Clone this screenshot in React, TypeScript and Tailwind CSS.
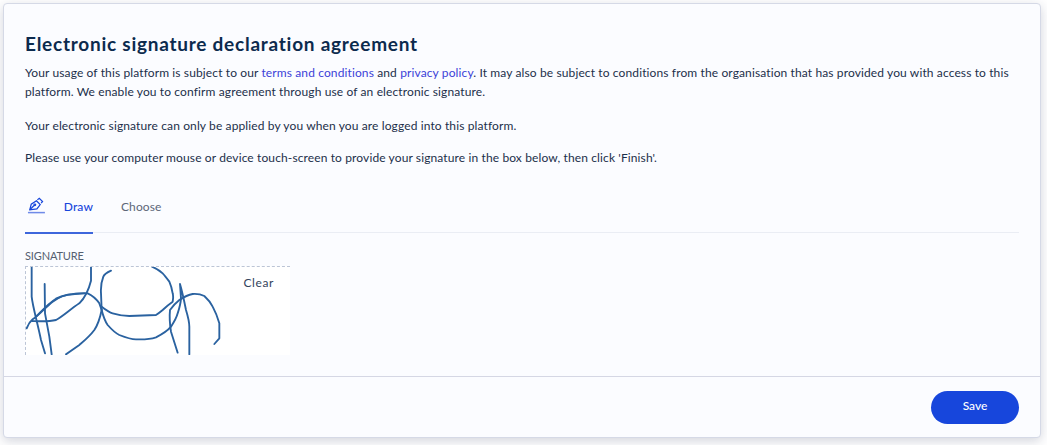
export default function App() {
  return (
    <div className="h-[445px] w-[1047px] bg-white pt-[3px] pl-[3px] font-['Lato',sans-serif] text-[#1c2f4a]">
      <div className="flex h-[435px] w-[1038px] flex-col rounded-[4px] border border-[#d5d9e6] bg-[#fbfcff] shadow-[0_3px_12px_rgba(30,40,80,0.2)]">
        <div className="h-[372px] px-[21px] pt-[29px]">
          <h1 className="text-[19px] leading-[22px] font-bold tracking-[0.75px] text-[#0c2a4d]">
            Electronic signature declaration agreement
          </h1>
          <div className="tracking-[0.12px]">
            <p className="mt-[8px] text-[12px] leading-[19px]">
              Your usage of this platform is subject to our <a className="text-[#3b3fd8]">terms and conditions</a> and{' '}
              <a className="text-[#3b3fd8]">privacy policy</a>. It may also be subject to conditions from the organisation
              that has provided you with access to this platform. We enable you to confirm agreement through use of an
              electronic signature.
            </p>
            <p className="mt-[15px] text-[12px] leading-[19px]">
              Your electronic signature can only be applied by you when you are logged into this platform.
            </p>
            <p className="mt-[13px] text-[12px] leading-[19px]">
              Please use your computer mouse or device touch-screen to provide your signature in the box below, then click
              'Finish'.
            </p>
          </div>

          <div className="mt-[15px] flex h-[51px] items-center border-b border-[#eaedf4]">
            <div className="relative flex h-[51px] w-[68px] items-center gap-[18px]">
              <svg width="20" height="18" viewBox="0 0 20 18" fill="none" stroke="#1746dc" strokeWidth="1.3" className="ml-[2px] mb-[2px]">
                <path d="M3 13 4.5 7 10 3.5 14 7.5 10.5 12Z" />
                <path d="M11 2.5 13 0.8 16.5 4.2 15 6" />
                <path d="M3 13 7.5 8.5" />
                <circle cx="8.3" cy="7.8" r="0.9" />
                <path d="M1 16H19" stroke="#6f8ae8" strokeWidth="1.6" />
              </svg>
              <span className="text-[12px] font-medium tracking-[0.1px] text-[#1746dc]">Draw</span>
              <div className="absolute right-0 -bottom-px left-0 h-[2px] bg-[#3d66dc]" />
            </div>
            <span className="ml-[28px] text-[12px] tracking-[0.1px] text-[#5b6678]">Choose</span>
          </div>

          <div className="mt-[16px] text-[11px] leading-[14px] tracking-[-0.15px] text-[#555f70]">SIGNATURE</div>
          <div className="relative mt-[3px] h-[89px] w-[265px] border-t border-l border-dashed border-[#bcc5d6] bg-white">
            <svg
              width="265"
              height="88"
              viewBox="30 21 795 264"
              fill="none"
              stroke="#2a62a0"
              strokeWidth="5.6"
              strokeLinecap="round"
              strokeLinejoin="round"
            >
              <path d="M47 20V110C50 140 65 190 75 240L87 280" />
              <path d="M86 72 87 160 100 230 107 283" />
              <path d="M225 20V62C218 90 210 110 190 130 160 150 140 170 120 180 95 186 70 184 48 183" />
              <path d="M32 205C38 190 44 183 50 178 70 165 90 140 110 125 130 110 150 103 170 103 190 101 205 98 215 100 232 108 242 118 250 130L257 150" />
              <path d="M62 168C80 150 95 132 120 116 140 105 165 100 205 100" />
              <path d="M285 32C272 38 265 42 262 50 256 65 254 85 255 100L257 150C252 175 245 195 235 210 220 230 205 242 190 255L150 283" />
              <path d="M257 140C270 150 280 157 290 160 310 166 325 168 340 168L420 165C428 160 434 155 440 150 450 140 460 132 470 125 472 115 472 108 470 100 468 88 465 76 460 65 452 54 446 46 440 40 430 31 420 25 408 20" />
              <path d="M257 150C262 170 268 185 275 195 290 212 300 220 310 225 330 233 345 238 360 238 385 239 405 237 420 232 440 222 455 212 465 200 475 185 482 172 485 160 490 145 494 130 495 115L492 72C500 100 505 125 510 150 516 170 520 190 520 200V283" />
              <path d="M485 278 465 215C461 190 460 170 462 150 470 138 480 128 490 120 505 110 518 104 530 102 545 101 555 103 565 108 576 118 584 128 590 140 598 155 605 172 610 190V235L595 252" />
            </svg>
            <span className="absolute top-[7px] right-[16px] text-[12px] tracking-[0.6px] text-[#34445c]">Clear</span>
          </div>
        </div>
        <div className="flex flex-1 items-start justify-end border-t border-[#d5d7e4] pt-[14px] pr-[21px]">
          <button className="h-[33px] w-[88px] rounded-full bg-[#1746dc] pb-[3px] text-[12px] font-medium text-white">
            Save
          </button>
        </div>
      </div>
    </div>
  );
}
